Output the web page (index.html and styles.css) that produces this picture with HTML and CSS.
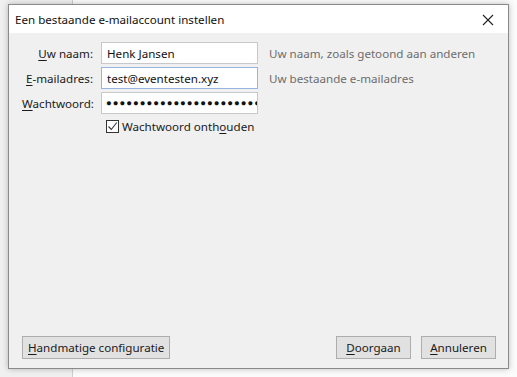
FILE: index.html
```html
<!DOCTYPE html>
<html>
<head>
<title>Een bestaande e-mailaccount instellen</title>
<link rel="stylesheet" href="styles.css">
</head>
<body>

<div id="desk">

	<!-- start:dialog -->
	<div id="dialog">

		<div class="titlebar">
			<span class="title">Een bestaande e-mailaccount instellen</span>
			<svg class="close" width="12" height="12" viewBox="0 0 12 12"><path d="M1 1L11 11M11 1L1 11" stroke="#222" stroke-width="1.1" fill="none"/></svg>
		</div>

		<div class="body">
			<div class="form">
				<label class="lbl"><u>U</u>w naam:</label>
				<input class="field" type="text" value="Henk Jansen">
				<span class="hint">Uw naam, zoals getoond aan anderen</span>

				<label class="lbl"><u>E</u>-mailadres:</label>
				<input class="field focus" type="text" value="test@eventesten.xyz">
				<span class="hint">Uw bestaande e-mailadres</span>

				<label class="lbl"><u>W</u>achtwoord:</label>
				<div class="field pass">&#9679;&#9679;&#9679;&#9679;&#9679;&#9679;&#9679;&#9679;&#9679;&#9679;&#9679;&#9679;&#9679;&#9679;&#9679;&#9679;&#9679;&#9679;&#9679;&#9679;&#9679;&#9679;&#9679;&#9679;</div>
				<span></span>

				<span></span>
				<div class="check">
					<span class="box"><svg width="11" height="11" viewBox="0 0 11 11"><path d="M1.5 5.5L4.3 8.5L9.8 1.5" stroke="#333" stroke-width="1.1" fill="none"/></svg></span>
					<span>Wachtwoord onth<u>o</u>uden</span>
				</div>
				<span></span>
			</div>

			<div class="buttons">
				<button class="btn"><u>H</u>andmatige configuratie</button>
				<span class="spacer"></span>
				<button class="btn wide"><u>D</u>oorgaan</button>
				<button class="btn wide"><u>A</u>nnuleren</button>
			</div>
		</div>

	</div>
	<!-- end:dialog -->

</div>

</body>
</html>
```

FILE: styles.css
```css
html, body {margin: 0; padding: 0;}
body {width: 517px; height: 377px; overflow: hidden; font: 11.6px "Noto Sans", "Open Sans", sans-serif; color: #1a1a1a; white-space: nowrap;
	background: linear-gradient(to right, #f0f0f0 0, #f0f0f0 72px, #cfcfcf 72px, #cfcfcf 73px, #fbfbfb 73px);}
u {text-decoration: underline; text-underline-offset: 2px;}
/* ---------- desk ---------- */
#desk {padding: 4px 0 0 8px;}
#dialog {width: 499px; height: 363px; border: 1px solid #8a8a8a; background: #f0f0f0; box-shadow: 0 0 6px rgba(0,0,0,.25); display: flex; flex-direction: column;}
/* ---------- title ---------- */
.titlebar {height: 28px; background: #fff; display: flex; align-items: center; padding: 0 14px 0 6px;}
.title {flex: 1; font-size: 11.6px; color: #111;}
.close {margin-top: 1px;}
/* ---------- form ---------- */
.body {flex: 1; display: flex; flex-direction: column; padding: 9px 12px 9px 13px;}
.form {display: grid; grid-template-columns: 71px 157px auto; column-gap: 8px; row-gap: 3px; align-items: center;}
.lbl {text-align: right; color: #1a1a1a;}
.field {box-sizing: border-box; width: 157px; height: 22px; border: 1px solid #c8c8c8; background: #fff; font: 11.6px "Noto Sans", sans-serif; padding: 0 5px; color: #111; outline: none;}
.field.focus {border-color: #98b4e0;}
.pass {font-size: 9.5px; letter-spacing: 1px; line-height: 20px; overflow: hidden; padding-left: 4px;}
.hint {color: #6d6d6d; padding-left: 3px;}
.check {display: flex; align-items: center; gap: 3px; padding-left: 5px; margin-top: 2px;}
.box {width: 11px; height: 11px; border: 1px solid #333; background: #fff; display: flex;}
/* ---------- buttons ---------- */
.buttons {margin-top: auto; display: flex; gap: 10px;}
.spacer {flex: 1;}
.btn {height: 23px; background: #e1e1e1; border: 1px solid #adadad; font: 11.6px "Noto Sans", sans-serif; color: #1a1a1a; padding: 0 5px; white-space: nowrap;}
.wide {width: 75px;}
```
